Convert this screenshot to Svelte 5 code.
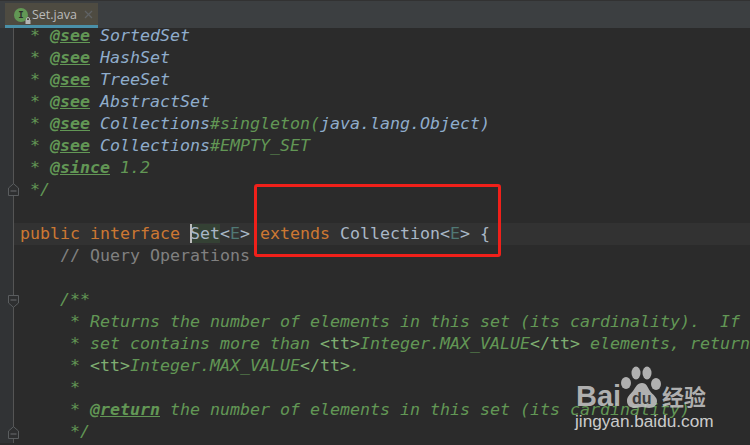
<script>
  const K = 'k', C = 'c', D = 'd', T = 't', L = 'l', G = 'g', E = 'e', P = 'p';
  const see = (rest) => [[D, ' * '], [T, '@see'], [D, ' '], ...rest];
  const rows = [
    { parts: see([[L, 'SortedSet']]) },
    { parts: see([[L, 'HashSet']]) },
    { parts: see([[L, 'TreeSet']]) },
    { parts: see([[L, 'AbstractSet']]) },
    { parts: see([[L, 'Collections'], [D, '#singleton('], [L, 'java.lang.Object)']]) },
    { parts: see([[L, 'Collections'], [D, '#EMPTY_SET']]) },
    { parts: [[D, ' * '], [T, '@since'], [D, ' 1.2']] },
    { parts: [[D, ' */']], fold: 'up', offset: 'f4' },
    { parts: [] },
    { current: true, parts: [[K, 'public interface '], ['s', 'Set'], [P, '<'], [E, 'E'], [P, '> '], [K, 'extends '], [P, 'Collection<'], [E, 'E'], [P, '> {']] },
    { parts: [[G, '    // Query Operations']] },
    { parts: [] },
    { parts: [[D, '    /**']], fold: 'down', offset: 'f6' },
    { parts: [[D, '     * Returns the number of elements in this set (its cardinality).  If']] },
    { parts: [[D, '     * set contains more than '], ['h', '<tt>'], [D, 'Integer.MAX_VALUE'], ['h', '</tt>'], [D, ' elements, return']] },
    { parts: [[D, '     * '], ['h', '<tt>'], [D, 'Integer.MAX_VALUE'], ['h', '</tt>'], [D, '.']] },
    { parts: [[D, '     *']] },
    { parts: [[D, '     * '], [T, '@return'], [D, ' the number of elements in this set (its cardinality)']] },
    { parts: [[D, '     */']], fold: 'up', offset: 'f5' }
  ];
</script>

<div class="page">
  <header class="tabbar">
    <div class="tab">
      <span class="ficon">
        <span class="ficon-i">I</span>
        <svg class="lock" viewBox="0 0 6 7" width="6" height="7"><path d="M1.5 3V2a1.5 1.5 0 0 1 3 0v1" fill="none" stroke="#b5b5b5"/><rect x="0.5" y="3" width="5" height="4" fill="#b5b5b5"/></svg>
      </span>
      <span class="tabname">Set.java</span>
      <svg class="close" viewBox="0 0 9 9" width="9" height="9"><path d="M1 1l7 7M8 1l-7 7" stroke="#5f6264" stroke-width="1.3"/></svg>
    </div>
  </header>

  <main class="editor">
    {#each rows as row}
      <div class="row" class:current={row.current}>
        <div class="gutter">
          {#if row.fold}
            <svg class="fold {row.offset}" class:flip={row.fold === 'down'} viewBox="0 0 11 13" width="11" height="13">
              <path d="M0.5 5L5.5 0.7l5 4.3v7.5h-10z" fill="#2e2f30" stroke="#5a5d5f"/>
              <path d="M2.5 8h6" stroke="#6a6d6f"/>
            </svg>
          {/if}
        </div>
        <pre class="code">{#each row.parts as [cls, text]}<span class={cls}>{text}</span>{/each}</pre>
      </div>
    {/each}
  </main>

  <div class="note"></div>

  <div class="mark">
    <svg class="paw" viewBox="0 0 60 48" width="60" height="48">
      <ellipse cx="15" cy="18" rx="5" ry="6" />
      <ellipse cx="25" cy="8" rx="4.5" ry="6.5" />
      <ellipse cx="36" cy="8" rx="4.5" ry="6.5" />
      <ellipse cx="45" cy="19" rx="5" ry="6" />
      <path d="M31 18c-5 0-6 4-9 8s-6 5-6 10 4 7 8 7c3 0 4-1 7-1s4 1 7 1c5 0 8-3 8-7s-4-6-7-10-3-8-8-8z" />
    </svg>
    <span class="bai">Bai</span>
    <span class="du">du</span>
    <span class="cn">经验</span>
    <span class="url">jingyan.baidu.com</span>
  </div>
</div>

<style>
  :global(body) { margin: 0; background: #2b2b2b; }
  .page {
    position: relative;
    width: 750px;
    height: 445px;
    overflow: hidden;
    background: #2b2b2b;
  }
  .tabbar {
    position: relative;
    z-index: 2;
    padding: 3px 0 0 5px;
    box-sizing: border-box;
    height: 28px;
    background: #3c3f41;
    border-top: 1px solid #323232;
    display: flex;
  }
  .tab {
    width: 93px;
    display: flex;
    align-items: center;
    gap: 4px;
    padding: 1px 0 0 9px;
    box-sizing: border-box;
    background: #4e4b41;
    border-bottom: 3px solid #4a90a8;
    margin-top: -1px;
  }
  .ficon {
    position: relative;
    width: 14px;
    height: 14px;
    border-radius: 50%;
    background: #629755;
    display: flex;
    align-items: center;
    justify-content: center;
    flex: none;
  }
  .ficon-i {
    font: bold 9px "DejaVu Sans Mono", monospace;
    color: #2b2b2b;
  }
  .lock { position: absolute; right: -3px; bottom: -2px; }
  .tabname {
    font: 12.5px "Open Sans", "DejaVu Sans", sans-serif;
    color: #bbbbbb;
    white-space: nowrap;
  }
  .close { margin-left: 3px; flex: none; }

  .editor {
    margin-top: -3px;
    display: flex;
    flex-direction: column;
  }
  .row {
    display: flex;
    height: 22px;
    flex: none;
  }
  .row.current { background: #323232; }
  .gutter {
    position: relative;
    flex: none;
    width: 13px;
    background: #313335;
    border-right: 1px solid #555555;
  }
  .fold { position: absolute; left: 8px; }
  .f4 { top: 4px; }
  .f5 { top: 5px; }
  .f6 { top: 6px; }
  .fold.flip { transform: scaleY(-1); }
  .code {
    margin: 0 0 0 6px;
    font: 16.62px/22px "DejaVu Sans Mono", monospace;
    color: #629755;
    white-space: pre;
  }
  .k { color: #cc7832; }
  .d { color: #629755; font-style: italic; }
  .t { color: #629755; font-style: italic; font-weight: bold; text-decoration: underline; }
  .l { color: #8fadcc; font-style: italic; }
  .h { color: #7fae72; }
  .g { color: #808080; }
  .e { color: #507874; }
  .p { color: #a9b7c6; }
  .s {
    color: #a9b7c6;
    background: #344134;
    box-shadow: inset 2px 0 0 #bbbbbb;
  }

  .note {
    position: absolute;
    left: 254px;
    top: 184px;
    width: 247px;
    height: 73px;
    box-sizing: border-box;
    border: 3px solid #f0201a;
    border-radius: 3px;
  }

  .mark {
    position: absolute;
    left: 575px;
    top: 365px;
    width: 140px;
    height: 70px;
    color: rgba(200, 200, 200, 0.85);
    font-family: "Liberation Sans", sans-serif;
  }
  .paw { position: absolute; left: 36px; top: 0; fill: rgba(200, 200, 200, 0.85); }
  .bai { position: absolute; left: 1px; top: 14px; font-size: 29px; font-weight: bold; line-height: 34px; }
  .du { position: absolute; left: 57px; top: 24px; font-size: 16px; font-weight: bold; line-height: 20px; color: #3a3a3a; }
  .cn { position: absolute; left: 87px; top: 17px; font: bold 22px/26px "Noto Sans CJK SC", sans-serif; }
  .url { position: absolute; left: 0; top: 47px; font-size: 17.2px; line-height: 18px; color: rgba(225, 225, 225, 0.9); }
</style>
